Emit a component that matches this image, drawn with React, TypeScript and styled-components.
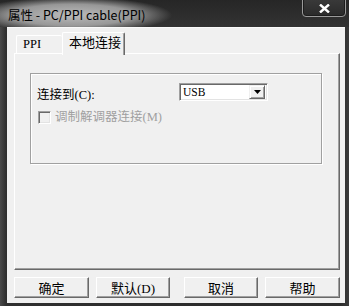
import React from "react";
import styled, { createGlobalStyle } from "styled-components";

const GlobalStyle = createGlobalStyle`
  html, body {
    margin: 0;
    padding: 0;
    width: 349px;
    height: 306px;
    overflow: hidden;
    background: #2a2a2a;
  }
`;

const uiFont = `"Liberation Serif", "Noto Sans CJK SC", serif`;

interface IButtonItem {
  key: string;
  label: string;
  width: number;
}

const buttons: IButtonItem[] = [
  { key: "ok", label: "确定", width: 75 },
  { key: "default", label: "默认(D)", width: 74 },
  { key: "cancel", label: "取消", width: 74 },
  { key: "help", label: "帮助", width: 75 },
];

export default function App() {
  return (
    <>
      <GlobalStyle />
      <S.Window>
        <S.TitleBar>
          <S.Title>属性 - PC/PPI cable(PPI)</S.Title>
          <S.CloseButton>
            <svg width="11" height="9" viewBox="0 0 11 9">
              <path d="M1 0.5 L10 8.5 M10 0.5 L1 8.5" stroke="#fff" strokeWidth="2.4" />
            </svg>
          </S.CloseButton>
        </S.TitleBar>
        <S.Client>
          <S.TabStrip>
            <S.Tab>PPI</S.Tab>
            <S.Tab $active>本地连接</S.Tab>
          </S.TabStrip>
          <S.Panel>
            <S.GroupBox>
              <S.Row>
                <S.Label>连接到(C):</S.Label>
                <S.Combo>
                  <S.ComboText>USB</S.ComboText>
                  <S.ComboButton>
                    <svg width="7" height="4" viewBox="0 0 7 4">
                      <path d="M0 0 H7 L3.5 4 Z" fill="#000" />
                    </svg>
                  </S.ComboButton>
                </S.Combo>
              </S.Row>
              <S.CheckRow>
                <S.CheckBox />
                <S.DisabledLabel>调制解调器连接(M)</S.DisabledLabel>
              </S.CheckRow>
            </S.GroupBox>
          </S.Panel>
          <S.ButtonRow>
            {buttons.map((item) => (
              <S.Button key={item.key} $width={item.width}>
                {item.label}
              </S.Button>
            ))}
          </S.ButtonRow>
        </S.Client>
      </S.Window>
    </>
  );
}

const S = {
  Window: styled.div`
    width: 349px;
    height: 306px;
    box-sizing: border-box;
    display: flex;
    flex-direction: column;
    padding: 0 4px 3px 7px;
    background: linear-gradient(90deg, #4a4a4a 0px, #2f2f2f 6px, #2b2b2b 340px, #3a3a3a 349px);
  `,
  TitleBar: styled.div`
    height: 27px;
    margin: 0 -4px 0 -7px;
    display: flex;
    align-items: flex-start;
    background:
      radial-gradient(ellipse 100px 18px at 72px 15px, rgba(195, 195, 195, 0.95) 0%, rgba(170, 170, 170, 0.85) 60%, rgba(60, 60, 60, 0) 100%),
      linear-gradient(180deg, #262626 0%, #333 100%);
  `,
  Title: styled.div`
    margin: 7px 0 0 8px;
    font-family: "Noto Sans CJK SC", "Noto Sans", sans-serif;
    font-size: 12.5px;
    line-height: 15px;
    color: #000;
    white-space: nowrap;
  `,
  CloseButton: styled.div`
    margin-left: auto;
    margin-right: 3px;
    margin-top: -2px;
    width: 44px;
    height: 19px;
    box-sizing: border-box;
    border: 1px solid #9a9a9a;
    border-radius: 0 0 4px 4px;
    box-shadow: inset 0 0 0 1px #1c1c1c;
    background: linear-gradient(180deg, #3a3a3a, #2a2a2a);
    display: flex;
    align-items: center;
    justify-content: center;
    padding-top: 2px;
  `,
  Client: styled.div`
    flex: 1;
    display: flex;
    flex-direction: column;
    background: #f0f0f0;
    box-shadow: inset 0 1px 0 #fafafa;
    padding: 5px 5px 5px 7px;
    font-family: ${uiFont};
    font-size: 12px;
    color: #000;
  `,
  TabStrip: styled.div`
    height: 21px;
    display: flex;
    align-items: flex-end;
    padding-left: 2px;
    position: relative;
    z-index: 1;
  `,
  Tab: styled.div<{ $active?: boolean }>`
    box-sizing: border-box;
    width: ${(p) => (p.$active ? 63 : 46)}px;
    height: ${(p) => (p.$active ? 23 : 18)}px;
    margin-bottom: ${(p) => (p.$active ? -2 : 0)}px;
    background: #f0f0f0;
    border-top: 1px solid #fff;
    border-left: 1px solid #fff;
    border-right: ${(p) => (p.$active ? "1px solid #696969" : "none")};
    box-shadow: ${(p) => (p.$active ? "inset -1px 0 0 #a0a0a0" : "none")};
    border-radius: 2px 2px 0 0;
    white-space: nowrap;
    overflow: hidden;
    font-size: ${(p) => (p.$active ? 13 : 12.5)}px;
    line-height: ${(p) => (p.$active ? 20 : 17)}px;
    padding-left: 6px;
  `,
  Panel: styled.div`
    height: 217px;
    box-sizing: border-box;
    border-top: 1px solid #fff;
    border-left: 1px solid #fff;
    border-right: 1px solid #696969;
    border-bottom: 1px solid #696969;
    box-shadow: inset -1px -1px 0 #a0a0a0;
    padding: 19px 0 0 15px;
  `,
  GroupBox: styled.div`
    width: 292px;
    height: 91px;
    box-sizing: border-box;
    border: 1px solid #a0a0a0;
    box-shadow: inset 1px 1px 0 #fff, 1px 1px 0 #fff;
    padding: 9px 0 0 6px;
    display: flex;
    flex-direction: column;
  `,
  Row: styled.div`
    height: 18px;
    display: flex;
    align-items: center;
  `,
  Label: styled.div`
    width: 142px;
    font-size: 12.5px;
    padding-top: 2px;
  `,
  Combo: styled.div`
    width: 89px;
    height: 18px;
    box-sizing: border-box;
    border-top: 1px solid #a0a0a0;
    border-left: 1px solid #a0a0a0;
    border-right: 1px solid #fff;
    border-bottom: 1px solid #fff;
    box-shadow: inset 1px 1px 0 #696969, inset -1px -1px 0 #e3e3e3;
    background: #fff;
    display: flex;
    align-items: center;
    padding: 2px;
  `,
  ComboText: styled.div`
    flex: 1;
    padding-left: 1px;
    font-size: 11.5px;
    line-height: 14px;
  `,
  ComboButton: styled.div`
    width: 16px;
    height: 14px;
    box-sizing: border-box;
    background: #f0f0f0;
    border-top: 1px solid #f0f0f0;
    border-left: 1px solid #f0f0f0;
    border-right: 1px solid #696969;
    border-bottom: 1px solid #696969;
    box-shadow: inset 1px 1px 0 #fff, inset -1px -1px 0 #a0a0a0;
    display: flex;
    align-items: center;
    justify-content: center;
  `,
  CheckRow: styled.div`
    margin-top: 9px;
    margin-left: 1px;
    display: flex;
    align-items: center;
    gap: 4px;
  `,
  CheckBox: styled.div`
    width: 13px;
    height: 13px;
    box-sizing: border-box;
    border-top: 1px solid #a0a0a0;
    border-left: 1px solid #a0a0a0;
    border-right: 1px solid #fff;
    border-bottom: 1px solid #fff;
    box-shadow: inset 1px 1px 0 #696969, inset -1px -1px 0 #e3e3e3;
    background: #f0f0f0;
  `,
  DisabledLabel: styled.div`
    color: #a0a0a0;
    font-size: 12.5px;
    line-height: 14px;
  `,
  ButtonRow: styled.div`
    margin-top: 7px;
    height: 21px;
    display: flex;
    gap: 7px;
    & > :nth-child(3) {
      margin-left: 7px;
    }
  `,
  Button: styled.div<{ $width: number }>`
    width: ${(p) => p.$width}px;
    height: 21px;
    box-sizing: border-box;
    background: #f0f0f0;
    border-top: 1px solid #fff;
    border-left: 1px solid #fff;
    border-right: 1px solid #696969;
    border-bottom: 1px solid #696969;
    box-shadow: inset -1px -1px 0 #a0a0a0;
    display: flex;
    align-items: center;
    justify-content: center;
    font-size: 13px;
  `,
};
